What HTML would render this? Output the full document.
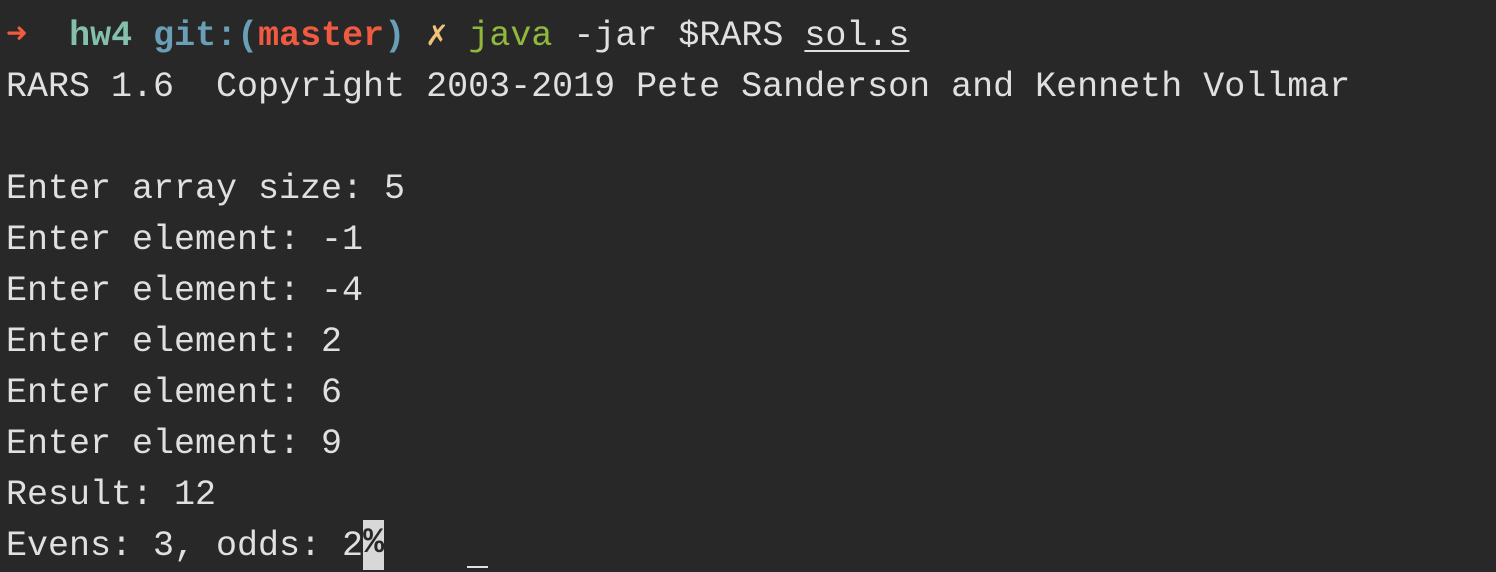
<!DOCTYPE html>
<html><head><meta charset="utf-8"><style>
html,body{margin:0;padding:0;background:#282828;width:1496px;height:568px;overflow:hidden}
pre{margin:0;position:absolute;left:6px;top:11px;font-family:"Liberation Mono","DejaVu Sans Mono",monospace;font-size:35px;line-height:51px;color:#e0e0e0;white-space:pre}
.r{color:#ef5a40;font-weight:bold}.t{color:#85bfae;font-weight:bold}.b{color:#6a9fb8;font-weight:bold}.y{color:#f0c27a}.g{color:#8fb83c}
.u{text-decoration:underline;text-underline-offset:5px;text-decoration-thickness:2px}
.c{background:#d8d8d8;color:#282828;font-weight:bold;display:inline-block;height:50px;line-height:46px;vertical-align:top;margin-top:-1px}
.m{position:absolute;left:467px;top:566px;width:21px;height:2px;background:#e0e0e0}
</style></head><body>
<pre><span class="r">➜</span>  <span class="t">hw4</span> <span class="b">git:(</span><span class="r">master</span><span class="b">)</span> <span class="y">✗</span> <span class="g">java</span> -jar $RARS <span class="u">sol.s</span>
RARS 1.6  Copyright 2003-2019 Pete Sanderson and Kenneth Vollmar

Enter array size: 5
Enter element: -1
Enter element: -4
Enter element: 2
Enter element: 6
Enter element: 9
Result: 12
Evens: 3, odds: 2<span class="c">%</span></pre>
<div class="m"></div>
</body></html>
